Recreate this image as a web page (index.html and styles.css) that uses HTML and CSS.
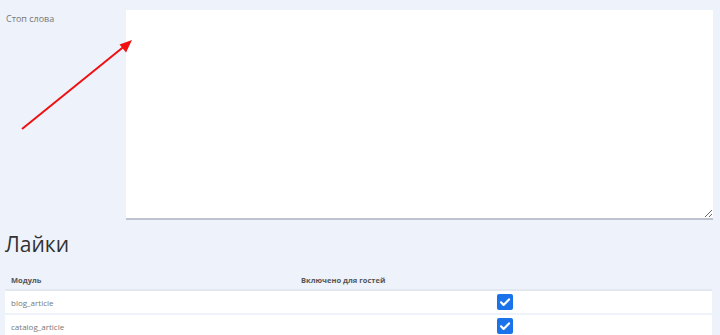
FILE: index.html
```html
<!DOCTYPE html>
<html lang="ru">
<head>
    <meta charset="UTF-8">
    <title>Настройки</title>
    <link rel="stylesheet" href="styles.css">
</head>
<body>
    <div class="field-row">
        <label class="field-label" for="stopWords">Стоп слова</label>
        <textarea id="stopWords" class="field-input"></textarea>
    </div>

    <h2 class="section-title">Лайки</h2>

    <div class="likes-table">
        <div class="table-head">
            <div class="cell">Модуль</div>
            <div class="cell">Включено для гостей</div>
        </div>
        <div class="table-row">
            <div class="cell">blog_article</div>
            <div class="cell check-cell"><span class="checkbox"><svg viewBox="0 0 16 16" width="16" height="16"><path d="M4 8.3l2.6 2.6L12 5.4" fill="none" stroke="#fff" stroke-width="2.2" stroke-linecap="round" stroke-linejoin="round"/></svg></span></div>
        </div>
        <div class="table-row">
            <div class="cell">catalog_article</div>
            <div class="cell check-cell"><span class="checkbox"><svg viewBox="0 0 16 16" width="16" height="16"><path d="M4 8.3l2.6 2.6L12 5.4" fill="none" stroke="#fff" stroke-width="2.2" stroke-linecap="round" stroke-linejoin="round"/></svg></span></div>
        </div>
    </div>

    <!-- annotation arrow -->
    <svg class="arrow" width="720" height="335" viewBox="0 0 720 335">
        <line x1="22" y1="129" x2="124" y2="46.5" stroke="#f01010" stroke-width="2"/>
        <path d="M132 40 L119.5 44.5 L126 52.5 Z" fill="#f01010"/>
    </svg>
</body>
</html>
```

FILE: styles.css
```css
* {
    margin: 0;
    padding: 0;
    box-sizing: border-box;
}

body {
    font-family: "Open Sans", Arial, sans-serif;
    background-color: #eef2fa;
    color: #333;
    width: 720px;
    height: 335px;
    overflow: hidden;
    position: relative;
}

/* Stop words row */
.field-row {
    display: flex;
    padding-top: 10px;
}

.field-label {
    width: 126px;
    padding: 2px 0 0 6px;
    font-size: 9px;
    color: #777;
}

.field-input {
    width: 587px;
    height: 210px;
    border: none;
    border-bottom: 2px solid #bcc2ce;
    background: #fff;
    resize: vertical;
    display: block;
}

/* Likes */
.section-title {
    font-size: 21px;
    font-weight: 400;
    color: #333;
    padding: 9px 0 0 5px;
    line-height: 30px;
    height: 51px;
}

.likes-table {
    margin-left: 5px;
    width: 707px;
}

.table-head,
.table-row {
    display: grid;
    grid-template-columns: 292px 1fr;
    align-items: center;
}

.table-head {
    height: 20px;
    border-bottom: 2px solid #e3e7f0;
    font-size: 7.5px;
    font-weight: 700;
    color: #555;
}

.table-row {
    height: 22px;
    background: #fff;
    font-size: 8px;
    color: #777;
    margin-bottom: 2px;
}

.cell {
    padding-left: 6px;
}

.table-head .cell:last-child {
    padding-left: 4px;
}

.check-cell {
    padding-left: 200px;
    display: flex;
}

.checkbox {
    width: 16px;
    height: 16px;
    border-radius: 2px;
    background: #1a73e8;
    display: block;
}

.checkbox svg {
    display: block;
}

.arrow {
    position: absolute;
    left: 0;
    top: 0;
    pointer-events: none;
}
```
